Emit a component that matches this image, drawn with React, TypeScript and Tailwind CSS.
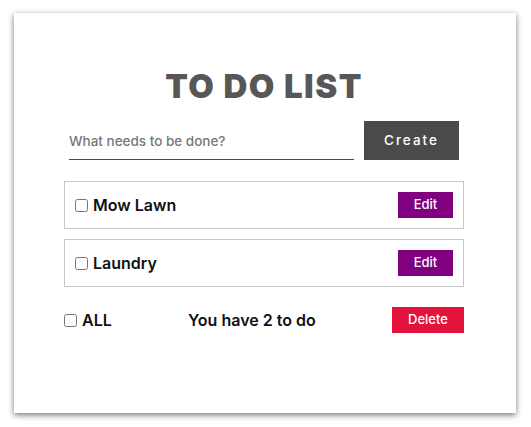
import { useState } from 'react';

interface Todo {
  id: number;
  text: string;
  done: boolean;
}

export default function App() {
  const [todos, setTodos] = useState<Todo[]>([
    { id: 1, text: 'Mow Lawn', done: false },
    { id: 2, text: 'Laundry', done: false },
  ]);
  const [draft, setDraft] = useState('');

  const toggle = (id: number) =>
    setTodos(prev => prev.map(t => (t.id === id ? { ...t, done: !t.done } : t)));

  const left = todos.filter(t => !t.done).length;

  return (
    <div className="min-h-[427px] bg-white pt-[13px] pl-[14px] font-['Inter',sans-serif]">
      <div className="flex h-[400px] w-[502px] flex-col items-center bg-white pr-[2px] shadow-[0_2px_6px_rgba(0,0,0,0.55)]">
        {/* Title */}
        <h1 className="mt-[53px] text-[33px] leading-[40px] font-black tracking-[1.5px] text-[#575757]">
          TO DO LIST
        </h1>

        {/* New item */}
        <div className="mt-[15px] flex w-[390px] items-stretch gap-[10px]">
          <input
            value={draft}
            onChange={e => setDraft(e.target.value)}
            placeholder="What needs to be done?"
            className="h-[39px] w-[285px] border-b-[1.5px] border-[#4a4a4a] bg-transparent pt-[2px] text-[13.5px] font-medium text-[#333] outline-none placeholder:text-[#777]"
          />
          <button className="h-[39px] w-[95px] bg-[#4a4a4a] text-[13.5px] font-medium tracking-[2px] text-white">
            Create
          </button>
        </div>

        {/* List */}
        <div className="mt-[21px] flex w-[400px] flex-col gap-[10px]">
          {todos.map(todo => (
            <div
              key={todo.id}
              className="flex h-[48px] items-center justify-between border border-[#c8c8c8] pr-[10px] pl-[10px]"
            >
              <label className="flex items-center gap-[5px] text-[16px] font-semibold text-[#111]">
                <input
                  type="checkbox"
                  checked={todo.done}
                  onChange={() => toggle(todo.id)}
                  className="h-[13px] w-[13px]"
                />
                {todo.text}
              </label>
              <button className="h-[26px] w-[55px] bg-[#800080] text-[13px] font-medium text-white">
                Edit
              </button>
            </div>
          ))}
        </div>

        {/* Footer */}
        <div className="mt-[20px] flex w-[400px] items-center justify-between">
          <label className="flex items-center gap-[5px] text-[16px] font-semibold text-[#111]">
            <input type="checkbox" className="h-[13px] w-[13px]" />
            ALL
          </label>
          <span className="text-[16px] font-semibold text-[#111]">You have {left} to do</span>
          <button className="h-[26px] w-[72px] bg-[#e3133b] text-[13px] font-medium text-white">
            Delete
          </button>
        </div>
      </div>
    </div>
  );
}
